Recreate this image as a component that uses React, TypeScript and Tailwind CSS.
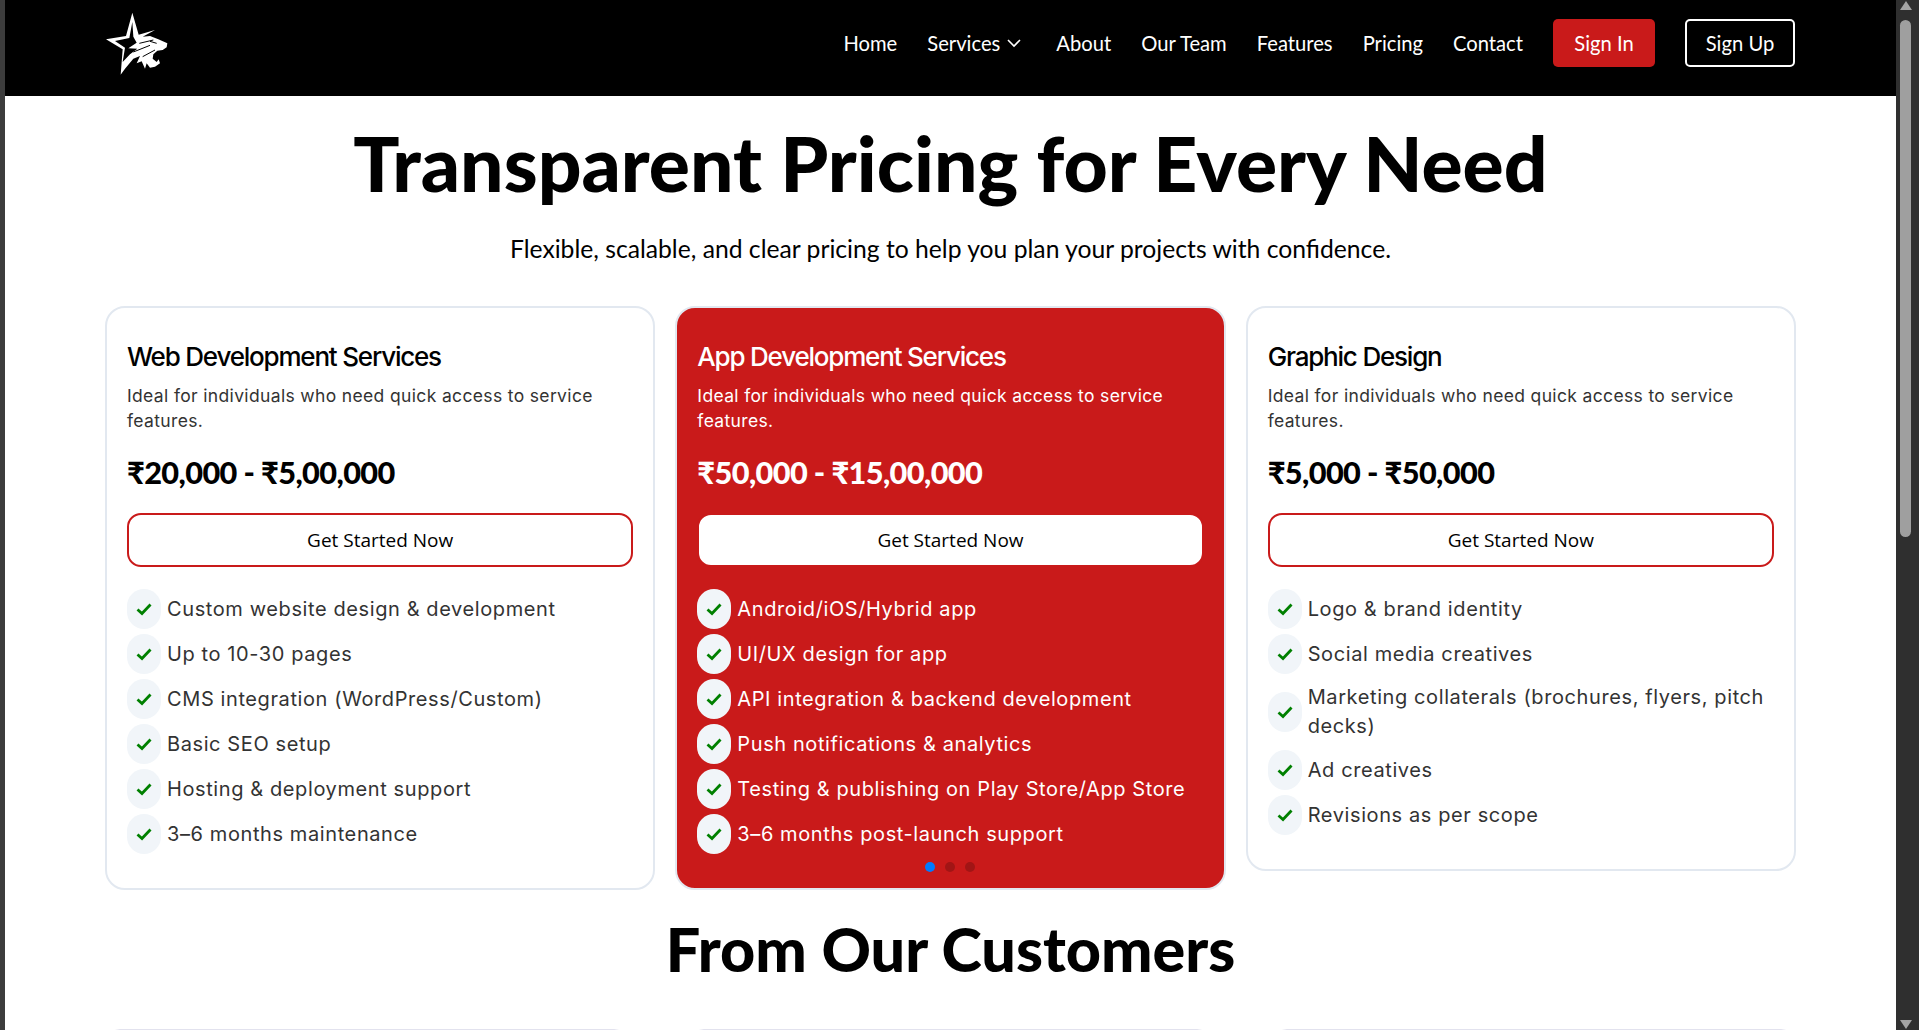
import React from "react";

const lato = "font-['Lato',sans-serif]";
const body = "font-['Inter',sans-serif]";
const seg = "font-['Open_Sans',sans-serif]";

const Logo = () => (
  <svg width="75" height="75" viewBox="0 0 225 225" className="block shrink-0">
    <path
      fill="#fff"
      fillRule="evenodd"
      d="M97 20 L116 86 L165 72 L128 92 L150 90 L175 100 L202 112 L200 124 L188 132 L172 134 L160 145 L158 158 L170 168 L176 160 L180 172 L165 182 L150 185 L140 172 L135 188 L125 166 L110 172 L120 150 L100 158 L75 188 L62 206 L68 130 L18 100 L78 90 Z M97 48 L88 96 L45 105 L75 125 L68 168 L90 145 L112 128 L85 127 L110 110 L100 92 Z"
    />
    <path fill="none" stroke="#000" strokeWidth="3" d="M118 112 L160 102 M100 138 L150 118 M128 152 L165 132 M150 106 L170 112" />
  </svg>
);

const Check = () => (
  <span className="flex h-[40px] w-[34px] shrink-0 items-center justify-center rounded-full bg-[#f1f5f9]">
    <svg width="16" height="16" viewBox="0 0 16 16" fill="none">
      <path d="M1.5 8.5 L6 12.5 L14.5 3.5" stroke="#008000" strokeWidth="2.8" />
    </svg>
  </span>
);

type CardProps = { title: string; price: string; items: string[]; featured?: boolean };

const Card = ({ title, price, items, featured }: CardProps) => (
  <div
    className={`relative flex-1 rounded-[20px] border-2 border-[#e2e8f0] px-[20px] pt-[29px] pb-[34px] ${
      featured ? "bg-[#c91a1a] text-white" : "bg-white text-black"
    }`}
  >
    <h3 className="font-['Inter',sans-serif] text-[26px] leading-[40px] font-medium tracking-[-1.2px]">{title}</h3>
    <p className={`${body} mt-[6px] text-[17.5px] leading-[25px] tracking-[0.35px] ${featured ? "text-white" : "text-[#333]"}`}>
      Ideal for individuals who need quick access to service features.
    </p>
    <div className={`${lato} mt-[16px] text-[30.7px] leading-[48px] font-black tracking-[-0.6px]`}>{price}</div>
    <button className={`${seg} mt-[16px] h-[54px] w-full rounded-[14px] border-2 border-[#c91a1a] bg-white pt-[1px] text-[19px] text-black`}>
      Get Started Now
    </button>
    <ul className={`${body} mt-[22px] flex flex-col gap-[5px] text-[20px] leading-[29px] tracking-[0.6px] ${featured ? "" : "text-[#333]"}`}>
      {items.map((t) => (
        <li key={t} className="flex items-center gap-[6px]">
          <Check />
          <span className={t.length > 45 && !featured ? "py-[4px]" : ""}>{t}</span>
        </li>
      ))}
    </ul>
    {featured && (
      <div className="absolute bottom-[16px] left-0 right-0 flex justify-center gap-[10px]">
        <span className="h-[10px] w-[10px] rounded-full bg-[#007bff]" />
        <span className="h-[10px] w-[10px] rounded-full bg-[#a11515]" />
        <span className="h-[10px] w-[10px] rounded-full bg-[#a11515]" />
      </div>
    )}
  </div>
);

export default function App() {
  return (
    <div className="flex h-[1030px] w-full overflow-hidden bg-white">
      <div className="w-[5px] shrink-0 bg-[#3c3c3c]" />
      <div className="min-w-0 flex-1">
        <header className={`${lato} flex h-[96px] items-center justify-between bg-black pl-[95px] pr-[101px] pb-[10px] text-white`}>
          <Logo />
          <nav className="flex items-center gap-[30px] text-[20.2px]">
            <a>Home</a>
            <a className="flex items-center gap-[6px] pr-[4px]">
              Services
              <svg width="16" height="16" viewBox="0 0 16 16" fill="none">
                <path d="M2 5 L8 11 L14 5" stroke="#fff" strokeWidth="1.6" />
              </svg>
            </a>
            <a>About</a>
            <a>Our Team</a>
            <a>Features</a>
            <a>Pricing</a>
            <a>Contact</a>
            <a className="flex h-[48px] w-[102px] items-center justify-center rounded-[5px] bg-[#c91a1a]">Sign In</a>
            <a className="flex h-[48px] w-[110px] items-center justify-center rounded-[5px] border-2 border-white">Sign Up</a>
          </nav>
        </header>
        <main className="pl-[100px] pr-[100px]">
          <h1 className={`${lato} mt-[23px] text-center text-[76.8px] leading-[86px] font-black text-black`}>
            Transparent Pricing for Every Need
          </h1>
          <p className={`${lato} mt-[25px] text-center text-[24.7px] leading-[38px] text-black`}>
            Flexible, scalable, and clear pricing to help you plan your projects with confidence.
          </p>
          <div className="mt-[38px] flex items-start gap-[20px]">
            <Card
              title="Web Development Services"
              price="₹20,000 - ₹5,00,000"
              items={[
                "Custom website design & development",
                "Up to 10-30 pages",
                "CMS integration (WordPress/Custom)",
                "Basic SEO setup",
                "Hosting & deployment support",
                "3–6 months maintenance",
              ]}
            />
            <Card
              featured
              title="App Development Services"
              price="₹50,000 - ₹15,00,000"
              items={[
                "Android/iOS/Hybrid app",
                "UI/UX design for app",
                "API integration & backend development",
                "Push notifications & analytics",
                "Testing & publishing on Play Store/App Store",
                "3–6 months post-launch support",
              ]}
            />
            <Card
              title="Graphic Design"
              price="₹5,000 - ₹50,000"
              items={[
                "Logo & brand identity",
                "Social media creatives",
                "Marketing collaterals (brochures, flyers, pitch decks)",
                "Ad creatives",
                "Revisions as per scope",
              ]}
            />
          </div>
          <h2 className={`${lato} mt-[20px] text-center text-[61.1px] leading-[77px] font-black text-black`}>From Our Customers</h2>
          <div className="mt-[42px] flex gap-[60px]">
            <div className="h-[100px] flex-1 rounded-[15px] border border-[#e2e2ee]" />
            <div className="h-[100px] flex-1 rounded-[15px] border border-[#e2e2ee]" />
            <div className="h-[100px] flex-1 rounded-[15px] border border-[#e2e2ee]" />
          </div>
        </main>
      </div>
      <div className="relative flex w-[23px] shrink-0 flex-col bg-[#2f2f2f] pl-[4px]">
        <svg width="12" height="9" viewBox="0 0 12 9" className="mt-[1px]"><path d="M6 0 L12 9 L0 9 Z" fill="#a3a3a3" /></svg>
        <div className="mt-[10px] h-[517px] w-[11px] rounded-[6px] bg-[#9f9f9f]" />
        <svg width="12" height="9" viewBox="0 0 12 9" className="absolute bottom-[1px]"><path d="M6 9 L12 0 L0 0 Z" fill="#a3a3a3" /></svg>
      </div>
    </div>
  );
}
